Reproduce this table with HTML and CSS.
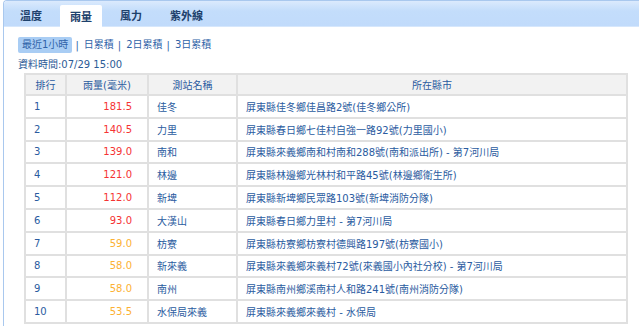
FILE: index.html
```html
<!DOCTYPE html>
<html lang="zh-Hant">
<head>
<meta charset="utf-8">
<link rel="stylesheet" href="styles.css">
</head>
<body>
<div class="panel">
  <div class="tabbar">
    <span class="tab">溫度</span>
    <span class="tab active">雨量</span>
    <span class="tab">風力</span>
    <span class="tab">紫外線</span>
  </div>
  <div class="content">
    <div class="subtabs">
      <span class="sub on">最近1小時</span><span class="sep">|</span><span class="sub">日累積</span><span class="sep">|</span><span class="sub">2日累積</span><span class="sep">|</span><span class="sub">3日累積</span>
    </div>
    <div class="time">資料時間:07/29 15:00</div>
    <table class="rank">
      <thead>
        <tr><th class="c1">排行</th><th class="c2">雨量(毫米)</th><th class="c3">測站名稱</th><th class="c4">所在縣市</th></tr>
      </thead>
      <tbody>
        <tr><td class="c1">1</td><td class="c2 red">181.5</td><td class="c3">佳冬</td><td class="c4">屏東縣佳冬鄉佳昌路2號(佳冬鄉公所)</td></tr>
        <tr><td class="c1">2</td><td class="c2 red">140.5</td><td class="c3">力里</td><td class="c4">屏東縣春日鄉七佳村自強一路92號(力里國小)</td></tr>
        <tr><td class="c1">3</td><td class="c2 red">139.0</td><td class="c3">南和</td><td class="c4">屏東縣來義鄉南和村南和288號(南和派出所) - 第7河川局</td></tr>
        <tr><td class="c1">4</td><td class="c2 red">121.0</td><td class="c3">林邊</td><td class="c4">屏東縣林邊鄉光林村和平路45號(林邊鄉衛生所)</td></tr>
        <tr><td class="c1">5</td><td class="c2 red">112.0</td><td class="c3">新埤</td><td class="c4">屏東縣新埤鄉民眾路103號(新埤消防分隊)</td></tr>
        <tr><td class="c1">6</td><td class="c2 red">93.0</td><td class="c3">大漢山</td><td class="c4">屏東縣春日鄉力里村 - 第7河川局</td></tr>
        <tr><td class="c1">7</td><td class="c2 orange">59.0</td><td class="c3">枋寮</td><td class="c4">屏東縣枋寮鄉枋寮村德興路197號(枋寮國小)</td></tr>
        <tr><td class="c1">8</td><td class="c2 orange">58.0</td><td class="c3">新來義</td><td class="c4">屏東縣來義鄉來義村72號(來義國小內社分校) - 第7河川局</td></tr>
        <tr><td class="c1">9</td><td class="c2 orange">58.0</td><td class="c3">南州</td><td class="c4">屏東縣南州鄉溪南村人和路241號(南州消防分隊)</td></tr>
        <tr><td class="c1">10</td><td class="c2 orange">53.5</td><td class="c3">水保局來義</td><td class="c4">屏東縣來義鄉來義村 - 水保局</td></tr>
      </tbody>
    </table>
  </div>
</div>
</body>
</html>
```
FILE: styles.css
```css
html, body {
  margin: 0;
  padding: 0;
  background: #fff;
}
body {
  font-family: "DejaVu Sans", "Noto Sans CJK TC", sans-serif;
  font-size: 10px;
  color: #2a5ba0;
}
.panel {
  margin-left: 3px;
  width: 636px;
  height: 326px;
  border-top: 1px solid #a9c8ee;
  border-left: 1px solid #a9c8ee;
  border-radius: 4px 0 0 0;
  overflow: hidden;
  box-sizing: border-box;
}
.tabbar {
  height: 25px;
  background: linear-gradient(#dbeafd, #c3ddfb 40%, #c1dbfb);
  border-bottom: 1px solid #d6e7fc;
  display: flex;
  align-items: flex-end;
  padding-left: 6px;
  gap: 8px;
}
.tab {
  height: 22px;
  line-height: 22px;
  padding: 0 10px;
  font-size: 11px;
  font-weight: bold;
  color: #1d416c;
  font-family: "Noto Sans CJK TC", sans-serif;
}
.tab.active {
  background: #fff;
  margin-bottom: -1px;
  border-radius: 2px 2px 0 0;
}
.content {
  padding: 10px 0 0 14px;
}
.subtabs {
  display: flex;
  align-items: center;
  height: 16px;
}
.sub {
  padding: 0 1px;
  height: 16px;
  line-height: 16px;
  color: #2f63a8;
}
.sub.on {
  background: #a9cdf4;
  border-radius: 2px;
  padding: 0 4px;
}
.sep {
  color: #2f63a8;
  margin: 0 4px 0 3px;
}
.time {
  margin-top: 5px;
  height: 14px;
  line-height: 14px;
  color: #2c5b96;
}
.rank {
  margin: 1px 0 0 6px;
  width: 604px;
  border-collapse: separate;
  border-spacing: 0;
  border-top: 2px solid #e0e0e0;
  border-left: 2px solid #e0e0e0;
}
.rank th, .rank td {
  box-sizing: border-box;
  border-right: 2px solid #e0e0e0;
  border-bottom: 2px solid #e0e0e0;
  padding: 0;
  white-space: nowrap;
}
.rank th {
  height: 21px;
  background: #f2f2f2;
  font-weight: normal;
  text-align: center;
  color: #2a5ba0;
}
.rank td {
  height: 22.8px;
  color: #2a5ba0;
}
.rank .c1 { width: 41px; }
.rank .c2 { width: 82px; }
.rank .c3 { width: 89px; }
.rank td.c1 { padding-left: 8px; }
.rank td.c2 { text-align: right; padding-right: 15px; }
.rank td.c3 { padding-left: 8px; }
.rank td.c4 { padding-left: 8px; }
.rank td.red { color: #f53333; }
.rank td.orange { color: #fcb133; }
```
